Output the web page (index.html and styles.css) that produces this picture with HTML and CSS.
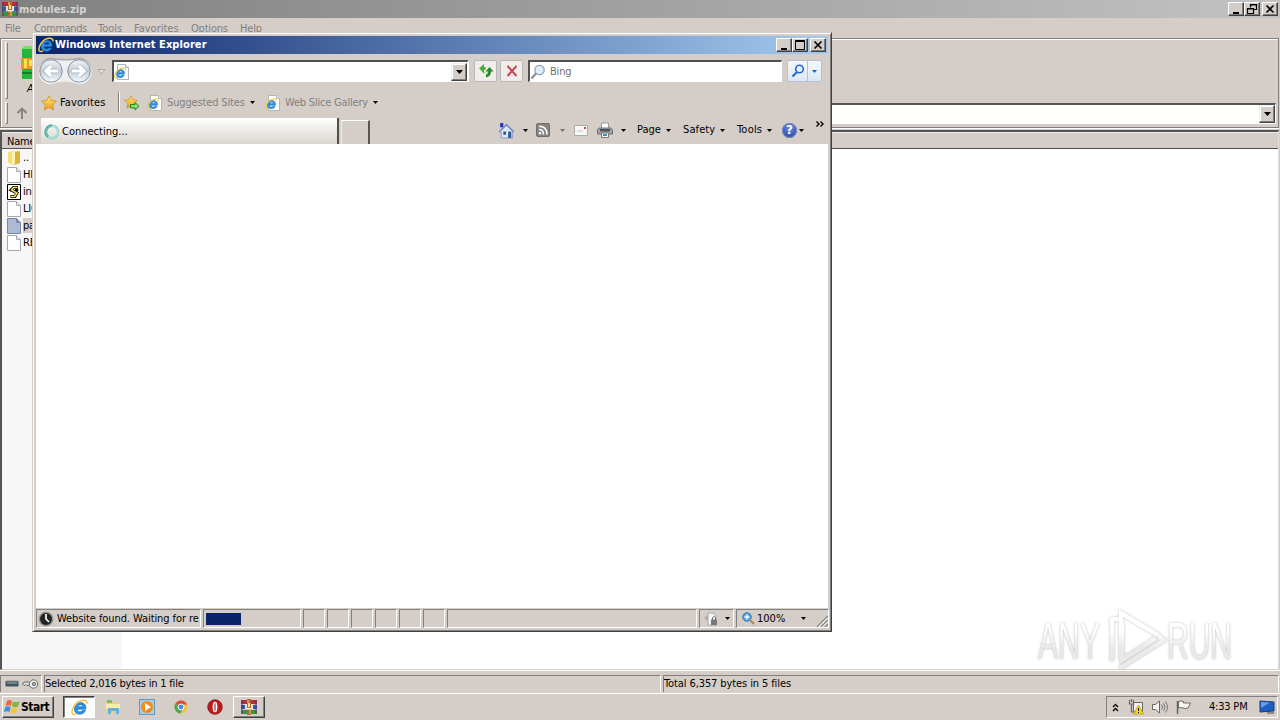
FILE: index.html
```html
<!DOCTYPE html>
<html lang="en">
<head>
    <meta charset="UTF-8">
    <title>Desktop</title>
    <link rel="stylesheet" href="styles.css">
</head>
<body>
<svg class="defs">
    <defs>
        <linearGradient id="gold" x1="0" y1="0" x2="0" y2="1"><stop offset="0" stop-color="#fff07a"/><stop offset="1" stop-color="#ee9a12"/></linearGradient>
        <linearGradient id="orb" x1="0" y1="0" x2="0" y2="1"><stop offset="0" stop-color="#f4f6f9"/><stop offset=".5" stop-color="#c3ccd6"/><stop offset="1" stop-color="#f2fbff"/></linearGradient>
        <linearGradient id="pill" x1="0" y1="0" x2="0" y2="1"><stop offset="0" stop-color="#a3a3aa"/><stop offset=".4" stop-color="#d3d3d6"/><stop offset="1" stop-color="#f4f4f2"/></linearGradient>
        <linearGradient id="mark" x1="0" y1="0" x2="0" y2="62" gradientUnits="userSpaceOnUse"><stop offset=".35" stop-color="#fff"/><stop offset=".65" stop-color="#e9e9e9"/></linearGradient>
    </defs>
    <symbol id="ie" viewBox="0 0 16 16">
        <path d="M14 9.600H6c-.1 2.700 3.200 3.300 4.600 1.300h3c-1.700 4.800-10.600 4.700-10.400-1.700C3.500 1.600 15 1.200 14 9.600zM6.300 7.300h4.900c0-2.600-4.200-2.600-4.900 0z" fill="#2b93ea" stroke="#1560ae" stroke-width=".6"/>
        <path d="M14.800 4.500C16.300-.5 7 .2 3 6.500-.2 11.500.2 16.500 5 13.800" fill="none" stroke="#f0cb4a" stroke-width="1.500"/>
    </symbol>
    <symbol id="iepage" viewBox="0 0 16 16">
        <path d="M3.500.5h8l3 3v12h-11z" fill="#fff" stroke="#b4b4b4"/>
        <path d="M11.500.5v3h3" fill="#eee" stroke="#b4b4b4"/>
        <use href="#ie" x="0" y="3" width="12" height="12"/>
    </symbol>
    <symbol id="rar" viewBox="0 0 16 16">
        <path d="M0 1h16v4H0z" fill="#b72c3f"/><path d="M0 6h16v4H0z" fill="#3456b4"/><path d="M0 11h16v4H0z" fill="#36963c"/>
        <path d="M0 1h2v14H0zM14 1h2v14h-2z" fill="#5b3268" opacity=".5"/>
        <path d="M6 0h4v16H6z" fill="#b3692c"/><path d="M4 5h2v5H4zM10 5h2v5h-2z" fill="#eee6c8"/><path d="M6 9h4v1.500H6z" fill="#fff"/><path d="M7 4h2v4H7z" fill="#f3dca0"/><path d="M6.500 1h1v3h-1zM8.500 11h1v4h-1z" fill="#f1ca68"/>
    </symbol>
    <symbol id="star" viewBox="0 0 16 16">
        <path d="M8 .8l2.200 4.700 5.200.6-3.800 3.600 1 5.200L8 12.300l-4.600 2.600 1-5.200L.6 6.100l5.200-.6z" fill="url(#gold)" stroke="#cf8a1c" stroke-width=".8"/>
    </symbol>
    <symbol id="file" viewBox="0 0 14 16">
        <path d="M.5.500h9l4 4v11H.5z" fill="#fdfdfd" stroke="#a8a8b0"/><path d="M9.500.5v4h4" fill="#e6e6ee" stroke="#a8a8b0"/>
    </symbol>
    <symbol id="down" viewBox="0 0 7 4"><path d="M0 0h7L3.500 4z"/></symbol>
    <symbol id="min" viewBox="0 0 12 10"><path d="M3 8h6v2H3z"/></symbol>
    <symbol id="close" viewBox="0 0 12 10"><path d="M2.500 1.500l7 7m0-7l-7 7" fill="none" stroke="#000" stroke-width="1.700"/></symbol>
</svg>

<div class="desktop">
    <div class="winrar">
        <div class="rar-title">
            <svg class="i16"><use href="#rar"/></svg>
            <span class="rar-name">modules.zip</span>
            <div class="win-buttons">
                <span><svg><use href="#min"/></svg></span>
                <span><svg viewBox="0 0 12 10"><path d="M4.500 3.500V.5h6v5H8M4 1h7M1.500 4.500h6v5h-6zM1 5h7" fill="none" stroke="#000" stroke-width="1.200"/></svg></span>
                <span class="x"><svg><use href="#close"/></svg></span>
            </div>
        </div>
        <div class="rar-menu">
            <span class="m1">File</span><span class="m2">Commands</span><span class="m3">Tools</span><span class="m4">Favorites</span><span class="m5">Options</span><span>Help</span>
        </div>
        <div class="rar-tools">
            <div class="big-row">
                <i class="grip"></i>
                <div class="add-tool">
                    <svg width="34" height="36" viewBox="0 0 34 36"><path d="M2 2h26v31H2z" fill="#26b53c"/><path d="M2 2l3-2h26l-3 3H2z" fill="#78df60"/><path d="M1 12h28v11H1z" fill="#e79b20"/><path d="M4 13h3v9H4zM9 14h3v6H9z" fill="#ffe35b"/><path d="M2 26h26v2H2z" fill="#137d25"/></svg>
                    <em>Add</em>
                </div>
            </div>
            <div class="path-row">
                <i class="grip"></i>
                <svg width="12" height="12" viewBox="0 0 12 12"><path d="M6 12V2M1.500 6L6 1.500 10.500 6" fill="none" stroke="#808080" stroke-width="1.800"/></svg>
                <div class="path-box"><span class="drop"><svg><use href="#down"/></svg></span></div>
            </div>
        </div>
        <div class="list">
            <div class="list-head">Name</div>
            <div class="list-body">
                <div class="names">
                    <div class="file"><svg viewBox="0 0 14 16"><path d="M1 2l6-1v14l-6-2z" fill="#f5df7c"/><path d="M7 2l6-1v12l-6 2z" fill="#d9b53a"/><path d="M5 2h3v12H5z" fill="#fff3ad"/></svg><span>..</span></div>
                    <div class="file"><svg><use href="#file"/></svg><span>HISTORY.md</span></div>
                    <div class="file"><svg viewBox="0 0 14 16"><path d="M.5.500h13v15H.5z" fill="#fffef0" stroke="#000"/><path d="M11 3.500H6.500L4 6l6 3-2 3.500H3.500M8 5.500l3 1.500" fill="none" stroke="#000" stroke-width="3"/><path d="M10.500 3.500h-4L4.500 6l5.500 3-2.300 3.500H4" fill="none" stroke="#eee55a" stroke-width="1.500"/></svg><span>index.js</span></div>
                    <div class="file"><svg><use href="#file"/></svg><span>LICENSE</span></div>
                    <div class="file selected"><svg viewBox="0 0 14 16"><path d="M.5.500h9l4 4v11H.5z" fill="#aeb9d3" stroke="#7884a3"/><path d="M9.500.5v4h4" fill="#8895b9" stroke="#7884a3"/></svg><span>package.json</span></div>
                    <div class="file"><svg><use href="#file"/></svg><span>README.md</span></div>
                </div>
            </div>
        </div>
        <div class="rar-status">
            <div class="disk">
                <svg width="14" height="8" viewBox="0 0 14 8"><rect x=".5" y="1" width="13" height="5.500" rx="1" fill="#42535b" stroke="#88949a"/><path d="M2 3h10" stroke="#a4b1b8"/></svg>
                <svg width="17" height="12" viewBox="0 0 17 12"><path d="M7 4H2L.500 6 2 7.500h1l1-1 1 1h2" fill="#ddd" stroke="#666"/><circle cx="11.500" cy="6" r="4.200" fill="#eee" stroke="#666"/><circle cx="12" cy="6" r="1.600" fill="#bbb" stroke="#666"/></svg>
            </div>
            <div class="sel">Selected 2,016 bytes in 1 file</div>
            <div class="total">Total 6,357 bytes in 5 files</div>
        </div>
    </div>

    <div class="taskbar">
        <div class="start">
            <svg width="17" height="16" viewBox="0 0 17 16"><path d="M3 2q3-2 5 0L7 7Q4 5.500 1.500 7z" fill="#ee6837"/><path d="M9 2.500q3 1.500 6.500 0L14 7.500q-3 1.500-6 0z" fill="#7cb83d"/><path d="M1.200 8.200Q4 6.500 6.600 8.200L5.400 13Q3 11.500 0 13z" fill="#3b8ee0"/><path d="M7.700 8.600q3 1.500 6 0l-1.500 5q-3 1.500-5.800-.3z" fill="#f7c52c"/></svg>
            <b>Start</b>
        </div>
        <div class="task on"><svg width="17" height="17"><use href="#ie"/></svg></div>
        <div class="pin"><svg viewBox="0 0 16 16"><path d="M1 2h6l1 2h7v10H1z" fill="#ecd06b"/><path d="M2 1h5v3H2z" fill="#7dbb6c"/><path d="M1 5h14v5H1z" fill="#f9edaa"/><path d="M3 9h11v6h-3v-3H6v3H3z" fill="#68afe0"/></svg></div>
        <div class="pin"><svg viewBox="0 0 16 16"><rect x=".5" y=".5" width="15" height="15" fill="#a9cbe6" stroke="#5c9cc9"/><circle cx="8" cy="8" r="6" fill="#f18c1b"/><path d="M6 4l6 4-6 4z" fill="#fff"/></svg></div>
        <div class="pin"><svg viewBox="0 0 16 16"><circle cx="8" cy="8" r="6.500" fill="#f4c62f"/><path d="M8 8L2.300 4.800A6.500 6.500 0 0 1 14 5.500H8z" fill="#e14a3c"/><path d="M8 8l-5.700-3.200A6.500 6.500 0 0 0 7.500 14.500L10 9.500z" fill="#4aa651"/><circle cx="8" cy="8" r="3" fill="#4d8ae8" stroke="#fff"/></svg></div>
        <div class="pin"><svg viewBox="0 0 16 16"><circle cx="8" cy="8" r="7.300" fill="#c0191d" stroke="#761013" stroke-width=".7"/><ellipse cx="8" cy="8" rx="2.400" ry="5.300" fill="#fff"/><ellipse cx="8" cy="8" rx="1" ry="4.500" fill="#b88"/></svg></div>
        <div class="task open"><svg width="16" height="16"><use href="#rar"/></svg></div>
        <div class="tray">
            <svg class="chev" viewBox="0 0 7 9"><path d="M1 4l2.500-2.500L6 4M1 8l2.500-2.500L6 8" fill="none" stroke="#000" stroke-width="1.300"/></svg>
            <svg class="net" viewBox="0 0 16 16"><path d="M5.500 3.500h9v9h-9z" fill="#eee" stroke="#666"/><path d="M1.500 1v4h4V1M3.500 5v8h5M3.500 0v3" fill="none" stroke="#666" stroke-width="1.200"/><path d="M10.500 6l5 9h-10z" fill="#f5d80f" stroke="#ab8b00" stroke-width=".6"/><path d="M10.500 9v3m0 1v1" stroke="#000"/></svg>
            <svg class="vol" viewBox="0 0 16 16"><path d="M.5 5.500h3L7.500 2v12l-4-3.500h-3z" fill="#f5f5f5" stroke="#666"/><path d="M9.500 5.500q2 2.500 0 5M11.500 4q3 4 0 8M13.500 2.500q4 5.500 0 11" fill="none" stroke="#777"/></svg>
            <svg class="flag" viewBox="0 0 16 16"><path d="M1.500 2v13" stroke="#666" stroke-width="1.500"/><path d="M2.500 2.500q3-1 5 0v1.500h7L12 9q-3 1-5 0-2-.8-4.500 0z" fill="#f6f6f6" stroke="#666"/></svg>
            <span class="clock">4:33 PM</span>
            <svg class="show" viewBox="0 0 16 14"><path d="M1 1l14 1v9L1 12z" fill="#1e5dc0" stroke="#173e7e"/><path d="M2 2l9 .6L2 8z" fill="#62a2ec"/><path d="M8 13h7" stroke="#444"/></svg>
        </div>
    </div>

    <!-- Internet Explorer window, floats above WinRAR -->
    <div class="ie-window">
        <div class="ie-title">
            <svg class="i16"><use href="#ie"/></svg>
            <b>Windows Internet Explorer</b>
            <div class="win-buttons">
                <span><svg><use href="#min"/></svg></span>
                <span><svg viewBox="0 0 12 10"><path d="M1.500.5h9v9h-9zM1 1.500h10" fill="none" stroke="#000"/></svg></span>
                <span class="x"><svg><use href="#close"/></svg></span>
            </div>
        </div>
        <div class="nav">
            <svg class="orbs" viewBox="0 0 56 28"><path d="M14 1.500Q28 4 42 1.500a12.500 12.500 0 0 1 0 25Q28 21 14 26.500a12.500 12.500 0 0 1 0-25z" fill="#eeeff1" stroke="url(#pill)" stroke-width="1.300"/><circle cx="14" cy="14" r="11.200" fill="url(#orb)" stroke="#8793a1"/><circle cx="42" cy="14" r="11.200" fill="url(#orb)" stroke="#8793a1"/><g fill="none" stroke="#a7b3bf" stroke-width="4.600"><path d="M21 14H10m4-5l-5 5 5 5M35 14h11m-4-5l5 5-5 5"/></g><g fill="none" stroke="#fff" stroke-width="3.200"><path d="M21 14H10m4-5l-5 5 5 5M35 14h11m-4-5l5 5-5 5"/></g></svg>
            <svg class="recent" viewBox="0 0 9 6"><path d="M1 .5h7L4.500 5z" fill="#e4e0dc" stroke="#aaa6a2"/></svg>
            <div class="address">
                <svg class="i16"><use href="#iepage"/></svg>
                <span class="drop"><svg><use href="#down"/></svg></span>
            </div>
            <div class="nav-btn refresh"><svg viewBox="0 0 16 16"><path d="M6 1L1 5.500l5 4V7h1.500V4H6z" fill="#46ad38"/><path d="M3 6h2.500q0 3 2 4.500Q3.500 10 3 6z" fill="#46ad38"/><path d="M8 14.500v-2.800q2-.7 2-3.200H7.500L11.500 4l4 4.500H13q0 5-5 6z" fill="#278b22"/></svg></div>
            <div class="nav-btn"><svg viewBox="0 0 16 16"><path d="M3.500 3l9 10m0-10l-9 10" stroke="#cc4251" stroke-width="1.900"/></svg></div>
            <div class="search"><svg viewBox="0 0 16 16"><circle cx="9.500" cy="6" r="4.700" fill="#dceef8" stroke="#8da0ae" stroke-width="1.300"/><path d="M6 9.500L1.500 14.500" stroke="#8b8b8b" stroke-width="2"/></svg><span>Bing</span></div>
            <div class="go"><span><svg width="14" height="14" viewBox="0 0 14 14"><circle cx="8.500" cy="5" r="3.800" fill="#eaf4ff" stroke="#2766d2" stroke-width="1.600"/><path d="M6 8l-4.500 4.500" stroke="#2766d2" stroke-width="2.200"/></svg></span><span class="go-more"><svg width="5" height="3" viewBox="0 0 7 4"><path d="M0 0h7L3.500 4z" fill="#1d62c0"/></svg></span></div>
        </div>
        <div class="favs">
            <svg class="i16"><use href="#star"/></svg>
            <span class="fav-label">Favorites</span>
            <i class="sep"></i>
            <svg class="i16 add-star" viewBox="0 0 16 16"><use href="#star" x="0" y="0" width="14" height="14"/><path d="M6.500 9.500H11v-2l4 3.700-4 3.700v-2H6.500z" fill="#8be26a" stroke="#238324"/></svg>
            <svg class="i16 pg"><use href="#iepage"/></svg>
            <span class="site s1">Suggested Sites</span><svg class="arr"><use href="#down"/></svg>
            <svg class="i16 pg2"><use href="#iepage"/></svg>
            <span class="site s2">Web Slice Gallery</span><svg class="arr"><use href="#down"/></svg>
        </div>
        <div class="tabs">
            <div class="tab"><svg class="i16" viewBox="0 0 16 16"><circle cx="8" cy="8" r="6.200" fill="none" stroke="#8fd4c6" stroke-width="2.600"/><path d="M8 1.800A6.200 6.200 0 0 0 4 12.700" fill="none" stroke="#37a69a" stroke-width="2.600"/><circle cx="8" cy="8" r="6" fill="none" stroke="#d5f4ed" stroke-width=".6"/></svg><span>Connecting...</span></div>
            <div class="new-tab"></div>
            <div class="commands">
                <svg class="home" viewBox="0 0 16 16"><path d="M2 1h3v4H2z" fill="#2430b2"/><path d="M3 8.500h10.500V15H3z" fill="#dce7f8" stroke="#8ba0c8"/><path d="M1 9.500L8 2.500l7 7" fill="#dce7f8" stroke="#6b83b5" stroke-width="1.300"/><path d="M9.500 9h3v6h-3z" fill="#315d9c"/><path d="M5 9h2.500v3H5z" fill="#31577f"/></svg>
                <svg class="arr a1"><use href="#down"/></svg>
                <svg class="rss" viewBox="0 0 14 14"><rect x=".5" y=".5" width="13" height="13" rx="1.500" fill="#888482" stroke="#6f6c6a"/><circle cx="4" cy="10.300" r="1.300" fill="#fff"/><path d="M3 6.500q4.500 0 4.500 5M3 3.200q8 0 8 8.300" fill="none" stroke="#fff" stroke-width="1.500"/></svg>
                <svg class="arr a2"><use href="#down"/></svg>
                <svg class="mail" viewBox="0 0 14 11"><path d="M.5.500h13v10H.5z" fill="#f7f7f7" stroke="#aaa"/><path d="M10 2h2v2h-2z" fill="#c44"/><path d="M3 6h6" stroke="#ccc"/></svg>
                <svg class="print" viewBox="0 0 16 16"><path d="M4.500 1h7v6h-7z" fill="#fff" stroke="#999"/><path d="M2 6h12l1.500 2v4H.5V8z" fill="#a2a6aa" stroke="#6d7175"/><path d="M3 7h10v2.500H3z" fill="#4c5255"/><path d="M4.500 11h7v4.500h-7z" fill="#fafafa" stroke="#777"/><path d="M6 12h4v2H6z" fill="#3990ba"/></svg>
                <svg class="arr a3"><use href="#down"/></svg>
                <span class="c1">Page</span><svg class="arr"><use href="#down"/></svg>
                <span class="c2">Safety</span><svg class="arr"><use href="#down"/></svg>
                <span class="c3">Tools</span><svg class="arr"><use href="#down"/></svg>
                <span class="help">?</span><svg class="arr a4"><use href="#down"/></svg>
                <svg class="more" viewBox="0 0 8 6"><path d="M.5.500L3 3 .5 5.500M4.500.500L7 3 4.500 5.500" fill="none" stroke="#000" stroke-width="1.400"/></svg>
            </div>
        </div>
        <div class="page"></div>
        <div class="ie-status">
            <div class="msg"><svg class="i16" viewBox="0 0 16 16"><circle cx="8" cy="8" r="7.500" fill="#999"/><circle cx="8" cy="8" r="6" fill="#222"/><path d="M8 3v5l3 3" fill="none" stroke="#fff" stroke-width="1.700"/></svg><span>Website found. Waiting for re</span></div>
            <div class="progress"><i></i></div>
            <div class="cell"></div><div class="cell"></div><div class="cell"></div><div class="cell"></div><div class="cell"></div><div class="cell"></div>
            <div class="zone"></div>
            <div class="lock"><svg width="16" height="14" viewBox="0 0 16 14"><path d="M5 1h5l3 3v9H5z" fill="#f4f4f4" stroke="#aaa"/><path d="M1 6l4-3v6z" fill="#aaa"/><path d="M8 7.500h6V13H8z" fill="#777"/><path d="M9.500 8V5.500q1.500-2 3 0V8" fill="none" stroke="#777"/></svg><svg class="arr"><use href="#down"/></svg></div>
            <div class="zoom"><svg width="13" height="13" viewBox="0 0 13 13"><circle cx="5" cy="5" r="4.200" fill="#58a6e8" stroke="#2c70b8"/><path d="M5 2.500v5M2.500 5h5" stroke="#fff" stroke-width="1.400"/><path d="M8 8l4 4" stroke="#b28a58" stroke-width="2.200"/></svg><span>100%</span><svg class="arr"><use href="#down"/></svg><svg class="resize" viewBox="0 0 12 12"><path d="M1 12L12 1M5 12l7-7M9 12l3-3" stroke="#858078" stroke-width="1.300"/><path d="M2.500 12L12 2.500M6.500 12L12 6.500" stroke="#fff"/></svg></div>
        </div>
    </div>

    <!-- watermark -->
    <svg class="watermark" viewBox="0 0 200 66">
        <text x="1" y="51" textLength="62" lengthAdjust="spacingAndGlyphs">ANY</text>
        <g fill="none" stroke="url(#mark)" stroke-width="4.500"><path d="M75 53V11h7"/><path d="M84 52V5l40 24"/><path d="M85 15v37l34-22M83 60l44-28-5-3"/></g>
        <text x="130" y="51" textLength="65" lengthAdjust="spacingAndGlyphs">RUN</text>
    </svg>
</div>
</body>
</html>
```

FILE: styles.css
```css
body {
    margin: 0;
    overflow: hidden;
    background: #d5cec8;
    font: 11px/14px "DejaVu Sans Condensed", "DejaVu Sans", sans-serif;
    font-stretch: condensed;
    letter-spacing: -0.2px;
    color: #000;
}

* {
    box-sizing: border-box;
}

svg {
    display: block;
    flex: none;
}

span {
    white-space: nowrap;
}

.defs {
    position: absolute;
    width: 0;
    height: 0;
}

.desktop {
    position: relative;
    width: 1280px;
    height: 720px;
    display: flex;
    flex-direction: column;
    overflow: hidden;
}

.i16 {
    width: 16px;
    height: 16px;
}

.arr {
    width: 5px;
    height: 3px;
}

/* ---------- shared window parts ---------- */
.win-buttons {
    display: flex;
    margin-left: auto;
}

.win-buttons span {
    width: 16px;
    height: 14px;
    padding: 1px 1px 0;
    background: #d5cec8;
    border: 1px solid;
    border-color: #fff #404040 #404040 #fff;
    box-shadow: inset -1px -1px #808080;
}

.win-buttons .x {
    margin-left: 2px;
}

.win-buttons svg {
    width: 12px;
    height: 10px;
}

.drop {
    width: 16px;
    height: 18px;
    margin-left: auto;
    display: flex;
    align-items: center;
    justify-content: center;
    background: #d5cec8;
    border: 1px solid;
    border-color: #eee #404040 #404040 #eee;
    box-shadow: inset -1px -1px #808080, inset 1px 1px #fff;
}

.drop svg {
    width: 7px;
    height: 4px;
}

/* ---------- WinRAR ---------- */
.winrar {
    height: 692px;
    display: flex;
    flex-direction: column;
}

.rar-title {
    height: 18px;
    padding: 1px 2px;
    display: flex;
    align-items: center;
    background: linear-gradient(90deg, #808080, #c2c2c2);
}

.rar-name {
    margin-left: 1px;
    padding-top: 1px;
    font-weight: bold;
    color: #d8d3cc;
    letter-spacing: 0;
}

.rar-menu {
    height: 20px;
    padding: 4px 5px 0;
    display: flex;
    color: #808080;
}

.m1 { width: 29px; }
.m2 { width: 64px; letter-spacing: -0.5px; }
.m3 { width: 36px; letter-spacing: 0; }
.m4 { width: 57px; letter-spacing: 0; }
.m5 { width: 49px; }

.m2 { letter-spacing: -0.4px; }

.rar-tools {
    height: 90px;
    margin-right: 1px;
    border: 1px solid #808080;
    box-shadow: inset 1px 1px #fff, 0 1px #fff;
}

.big-row {
    height: 63px;
    padding: 3px 4px;
    display: flex;
}

.grip {
    width: 3px;
    border: 1px solid;
    border-color: #fff #808080 #808080 #fff;
}

.add-tool {
    margin: 4px 0 0 12px;
}

.add-tool em {
    display: block;
    margin: 0 0 0 7px;
}

.path-row {
    height: 25px;
    padding: 0 2px 3px 4px;
    display: flex;
    align-items: center;
}

.path-row .grip {
    height: 22px;
}

.path-row > svg {
    margin-left: 8px;
}

.path-box {
    flex: 1;
    height: 21px;
    margin-left: 12px;
    display: flex;
    background: #fffffb;
    border: 1px solid;
    border-color: #555 #fff #fff #555;
    border-top-width: 2px;
}

.list {
    height: 540px;
    margin: 2px 1px 0 0;
    display: flex;
    flex-direction: column;
    border: solid;
    border-width: 2px 1px 1px 2px;
    border-color: #555 #ddd #d5cec8 #555;
}

.list-head {
    height: 17px;
    padding: 3px 5px 0;
    background: #d5cec8;
    border-bottom: 1px solid #505050;
    box-shadow: inset 0 1px #eee;
    line-height: 13px;
}

.list-body {
    flex: 1;
    background: #fff;
}

.names {
    width: 120px;
    height: 100%;
    background: #f7f7f7;
}

.file {
    height: 17px;
    padding-left: 5px;
    display: flex;
    align-items: center;
}

.file svg {
    width: 14px;
    height: 16px;
}

.file span {
    margin-left: 2px;
    padding-top: 1px;
}

.selected span {
    background: #d5cec8;
}

.rar-status {
    height: 22px;
    display: flex;
    gap: 2px;
    padding: 4px 1px 0 0;
    border-top: 1px solid #fff;
    line-height: 16px;
}

.rar-status > div {
    height: 18px;
    border: 1px solid;
    border-color: #808080 #fff #fff #808080;
}

.disk {
    width: 42px;
    display: flex;
    align-items: center;
    gap: 3px;
    padding-left: 4px;
}

.sel {
    width: 617px;
}

.total {
    flex: 1;
    letter-spacing: -0.1px;
}

/* ---------- taskbar ---------- */
.taskbar {
    height: 28px;
    padding: 2px 1px 0 2px;
    display: flex;
    border-top: 1px solid #d5cec8;
    box-shadow: inset 0 1px #fff;
}

.start {
    width: 52px;
    height: 22px;
    margin-top: 1px;
    padding-left: 1px;
    display: flex;
    align-items: center;
    border: 1px solid;
    border-color: #fff #404040 #404040 #fff;
    box-shadow: inset -1px -1px #808080;
}

.start b {
    font-size: 12px;
    letter-spacing: -0.5px;
}

.task {
    width: 32px;
    height: 22px;
    margin-top: 1px;
    display: flex;
    align-items: center;
    justify-content: center;
    border: 1px solid;
    border-color: #fff #404040 #404040 #fff;
    box-shadow: inset -1px -1px #808080;
}

.on {
    margin: 1px 1px 0 9px;
    background: #fdfdfd;
    border-color: #404040 #fff #fff #404040;
    box-shadow: inset 1px 1px #808080;
}

.pin {
    width: 34px;
    height: 22px;
    margin-top: 1px;
    display: flex;
    align-items: center;
    justify-content: center;
}

.pin svg {
    width: 16px;
    height: 16px;
}

.open {
    margin-left: 1px;
}

.tray {
    width: 172px;
    height: 22px;
    margin: 1px 1px 0 auto;
    display: flex;
    align-items: center;
    padding-left: 5px;
    border: 1px solid;
    border-color: #808080 #fff #fff #808080;
}

.chev {
    width: 7px;
    height: 9px;
}

.net, .vol, .flag {
    width: 16px;
    height: 16px;
}

.net { margin-left: 9px; }
.vol { margin-left: 8px; }
.flag { margin-left: 8px; }

.clock {
    width: 40px;
    margin-left: 17px;
}

.show {
    width: 16px;
    height: 14px;
    margin-left: 10px;
}

/* ---------- Internet Explorer ---------- */
.ie-window {
    position: absolute;
    left: 32px;
    top: 32px;
    width: 800px;
    height: 600px;
    padding: 2px;
    display: flex;
    flex-direction: column;
    background: #d5cec8;
    border: 1px solid;
    border-color: #d5cec8 #404040 #404040 #d5cec8;
    box-shadow: inset 1px 1px #fff, inset -1px -1px #808080;
}

.ie-title {
    height: 18px;
    margin: 1px 1px 0;
    padding: 0 2px;
    display: flex;
    align-items: center;
    background: linear-gradient(90deg, #0a246a, #a6caf0);
    color: #fff;
}

.ie-title b {
    margin-left: 1px;
    letter-spacing: 0.08px;
}

.nav {
    height: 36px;
    padding: 6px 7px 0 2px;
    display: flex;
}

.orbs {
    width: 56px;
    height: 28px;
    margin-top: -3px;
}

.recent {
    width: 9px;
    height: 6px;
    margin: 9px 0 0 4px;
}

.address {
    width: 357px;
    height: 22px;
    margin-left: 6px;
    padding: 0;
    display: flex;
    align-items: center;
    background: #fff;
    border: solid;
    border-width: 2px 2px 1px 2px;
    border-color: #505050 #fff #fff #505050;
}

.nav-btn {
    width: 23px;
    height: 22px;
    margin-left: 3px;
    display: flex;
    align-items: center;
    justify-content: center;
    background: #f0edea;
    border: 1px solid #b7b6b9;
    border-radius: 2px;
}

.nav-btn svg {
    width: 16px;
    height: 16px;
}

.refresh {
    margin-left: 5px;
}

.search {
    width: 254px;
    height: 22px;
    margin-left: 5px;
    display: flex;
    align-items: center;
    color: #707070;
    background: #fff;
    border: solid;
    border-width: 2px 1px 1px 2px;
    border-color: #505050 #fff #fff #505050;
}

.search svg {
    width: 16px;
    height: 16px;
}

.search span {
    margin-left: 4px;
    padding-top: 1px;
}

.go {
    width: 35px;
    height: 22px;
    margin-left: 5px;
    display: flex;
    background: linear-gradient(#f5f8fc, #dbe7f5);
    border: 1px solid #b5c0d0;
    border-radius: 2px;
}

.go span {
    width: 20px;
    display: flex;
    align-items: center;
    justify-content: center;
}

.go .go-more {
    width: 14px;
    border-left: 1px solid #b5c0d0;
}

.favs {
    height: 25px;
    padding-left: 6px;
    display: flex;
    align-items: center;
}

.fav-label {
    width: 58px;
    margin-left: 3px;
    letter-spacing: 0.1px;
}

.sep {
    width: 2px;
    height: 20px;
    margin-top: -2px;
    background: #808080;
    border-right: 1px solid #fff;
}

.add-star { margin-left: 4px; }
.pg { margin-left: 7px; }
.pg2 { margin-left: 10px; }

.site {
    margin-left: 4px;
    color: #808080;
}

.s1 { width: 83px; letter-spacing: -0.15px; }
.s2 { width: 88px; letter-spacing: -0.2px; }

.tabs {
    height: 29px;
    padding: 3px 0 0 6px;
    display: flex;
}

.tab {
    width: 298px;
    height: 26px;
    padding: 1px 0 0 3px;
    display: flex;
    align-items: center;
    background: linear-gradient(#fff, #d9d6cf);
    border-right: 2px solid #505050;
}

.tab span {
    margin-left: 2px;
    padding-top: 1px;
    letter-spacing: 0;
}

.new-tab {
    width: 29px;
    height: 24px;
    margin: 2px 0 0 2px;
    border: 1px solid;
    border-width: 1px 2px 0 1px;
    border-color: #fff #555 #555 #eee;
}

.commands {
    flex: 1;
    height: 24px;
    margin-left: 128px;
    display: flex;
    align-items: center;
}

.home { width: 17px; height: 17px; }
.a1 { margin-left: 8px; }
.rss { width: 14px; height: 14px; margin-left: 8px; }
.a2 { margin-left: 10px; opacity: .45; }
.mail { width: 14px; height: 11px; margin-left: 9px; }
.print { width: 16px; height: 16px; margin-left: 9px; }
.a3 { margin-left: 8px; }
.c1 { width: 29px; margin-left: 11px; letter-spacing: 0; }
.c2 { width: 37px; margin-left: 12px; letter-spacing: 0.1px; }
.c3 { width: 30px; margin-left: 12px; letter-spacing: 0.2px; }
.a4 { margin-left: 2px; }

.help {
    width: 15px;
    height: 15px;
    margin-left: 10px;
    border-radius: 50%;
    background: radial-gradient(circle at 50% 30%, #6a8de0, #173b9d);
    box-shadow: inset 0 0 0 1px #7888b8;
    color: #fff;
    font: bold 12px/15px "DejaVu Sans", sans-serif;
    text-align: center;
}

.more {
    width: 8px;
    height: 6px;
    margin: -12px 0 0 12px;
}

.page {
    flex: 1;
    margin: 0 1px 0 1px;
    background: #fff;
}

.ie-status {
    height: 20px;
    margin: 1px 0 0 1px;
    padding-bottom: 1px;
    display: flex;
    gap: 2px;
}

.ie-status > div {
    display: flex;
    align-items: center;
    border: 1px solid;
    border-color: #808080 #fff #fff #808080;
    overflow: hidden;
}

.msg {
    width: 165px;
    padding-left: 1px;
}

.msg span {
    margin-left: 3px;
    padding-top: 1px;
    letter-spacing: -0.08px;
}

.progress {
    width: 98px;
    padding-left: 2px;
}

.progress i {
    width: 35px;
    height: 12px;
    background: #0a246a;
}

.cell {
    width: 22px;
}

.zone {
    flex: 1;
}

.lock {
    width: 35px;
    padding-left: 3px;
    gap: 6px;
}

.zoom {
    width: 93px;
    padding-left: 5px;
}

.zoom span {
    width: 44px;
    margin-left: 2px;
    padding-top: 1px;
    letter-spacing: 0;
}

.resize {
    width: 12px;
    height: 12px;
    margin: 5px 0 0 auto;
}

/* ---------- watermark ---------- */
.watermark {
    position: absolute;
    left: 1037px;
    top: 608px;
    width: 200px;
    height: 66px;
    filter: drop-shadow(0 0 1px #b8b8b8);
}

.watermark text {
    fill: url(#mark);
    font: 52px "Liberation Sans", sans-serif;
    letter-spacing: 0;
}
```
